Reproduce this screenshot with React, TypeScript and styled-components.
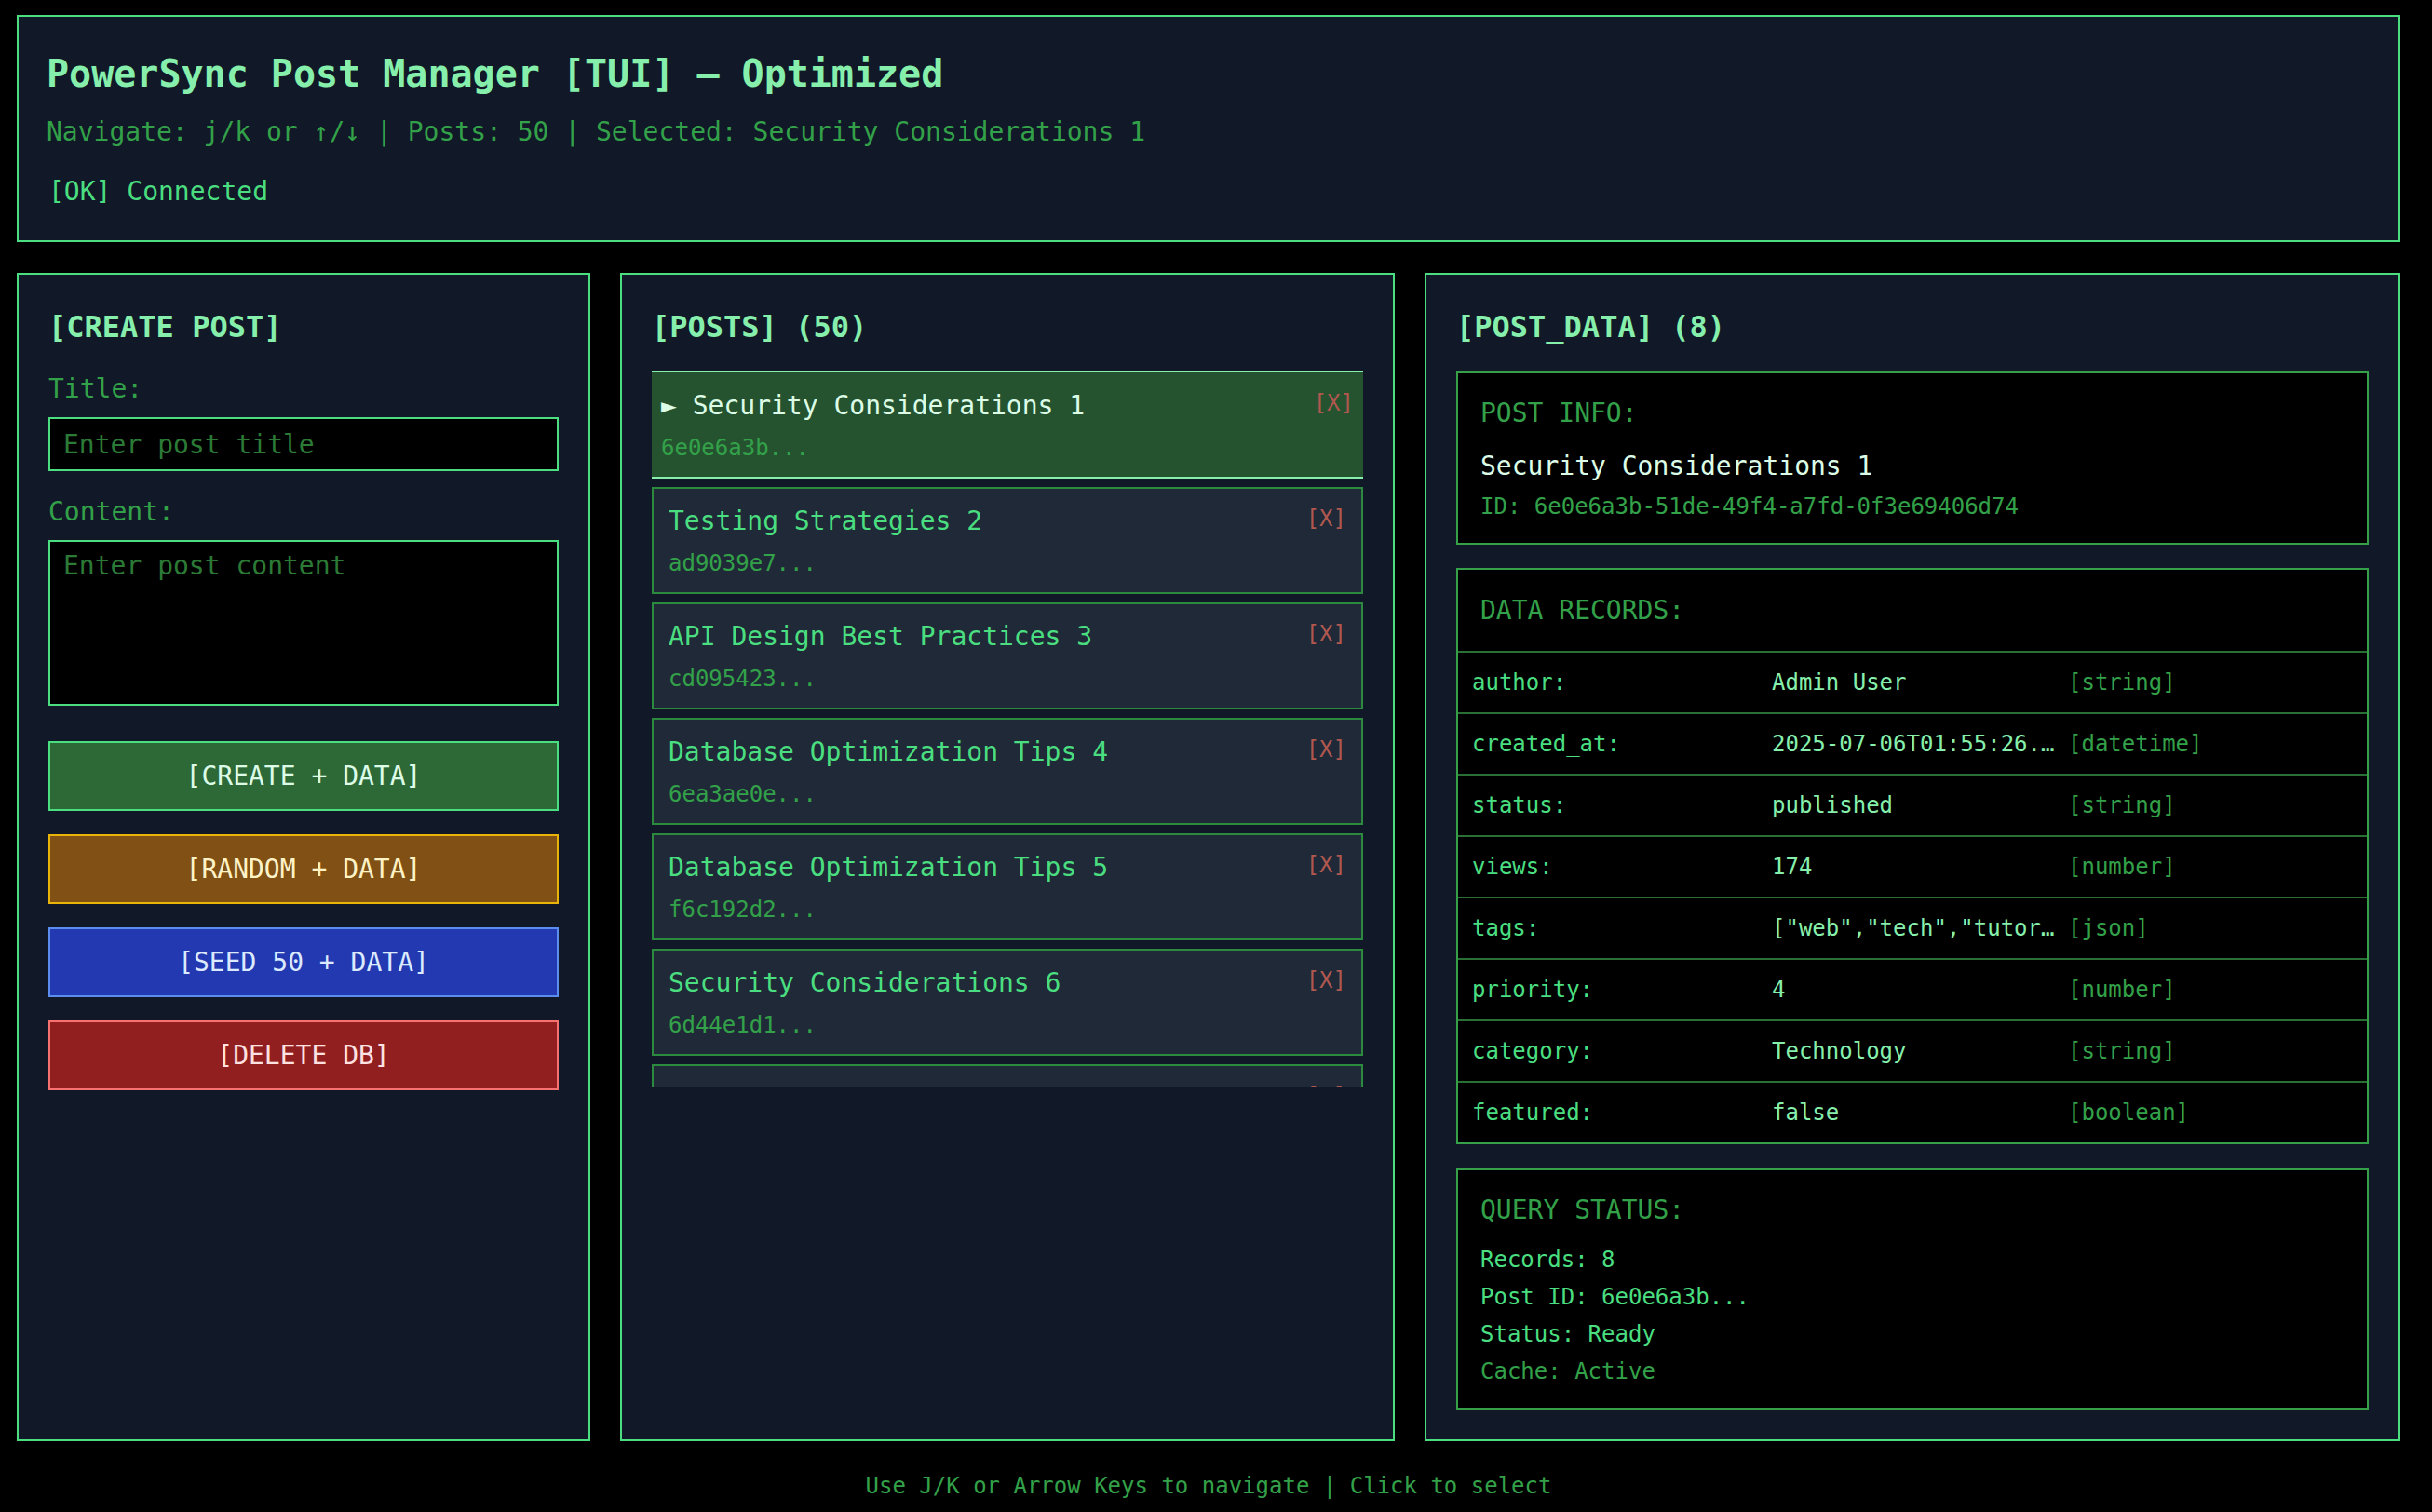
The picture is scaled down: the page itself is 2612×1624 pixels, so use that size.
import React, { useState } from "react";
import styled, { createGlobalStyle, css } from "styled-components";

const C = {
  page: "#000000",
  panel: "#111827",
  item: "#1f2937",
  border: "#4ade80",
  inner: "#35a048",
  itemBorder: "#2b8a3e",
  row: "#2a7035",
  bright: "#86efac",
  main: "#4ade80",
  dim: "#33a149",
  faint: "#2b7a36",
  pale: "#dcfce7",
  selected: "#255330",
  remove: "#b0584f",
};

const GlobalStyle = createGlobalStyle`
  html, body {
    margin: 0;
    background: ${C.page};
    font-family: "DejaVu Sans Mono", "Liberation Mono", monospace;
  }
  * { box-sizing: border-box; }
`;

const Screen = styled.div`
  width: 2560px;
  margin-left: 18px;
  padding-top: 16px;
  padding-bottom: 14px;
`;

const Header = styled.header`
  border: 2px solid ${C.border};
  background: ${C.panel};
  padding: 37px 30px 35px;
`;

const AppTitle = styled.h1`
  margin: 0;
  font-size: 40px;
  line-height: 48px;
  font-weight: bold;
  color: ${C.bright};
`;

const NavLine = styled.div`
  margin-top: 22px;
  font-size: 28px;
  line-height: 34px;
  color: ${C.dim};
`;

const Status = styled.div`
  margin-top: 30px;
  font-size: 28px;
  line-height: 34px;
  color: ${C.main};
  padding-left: 2px;
`;

const Columns = styled.div`
  display: grid;
  grid-template-columns: 616px 832px 1fr;
  column-gap: 32px;
  margin-top: 33px;
  align-items: stretch;
`;

const Panel = styled.section`
  background: ${C.panel};
  border: 2px solid ${C.border};
  padding: 37px 32px 32px;
  display: flex;
  flex-direction: column;
  min-width: 0;
`;

const PanelTitle = styled.h2`
  margin: 0 0 29px;
  font-size: 32px;
  line-height: 38px;
  font-weight: bold;
  color: ${C.bright};
`;

const Label = styled.label`
  display: block;
  font-size: 28px;
  line-height: 38px;
  color: ${C.dim};
  margin-bottom: 11px;
`;

const fieldBase = css`
  width: 100%;
  background: #000;
  border: 2px solid ${C.border};
  color: ${C.main};
  font-family: inherit;
  font-size: 28px;
  outline: none;
  &::placeholder {
    color: ${C.faint};
  }
`;

const TextInput = styled.input`
  ${fieldBase};
  display: block;
  height: 58px;
  padding: 0 14px;
  margin-bottom: 25px;
`;

const TextArea = styled.textarea`
  ${fieldBase};
  display: block;
  height: 178px;
  padding: 9px 14px;
  line-height: 34px;
  resize: none;
  margin-bottom: 38px;
`;

const tones = {
  create: { bg: "#2d6837", border: "#4ade80", text: "#dcfce7" },
  random: { bg: "#805014", border: "#eab308", text: "#fef3c7" },
  seed: { bg: "#2239b1", border: "#5b8def", text: "#dbeafe" },
  remove: { bg: "#911f1f", border: "#f87171", text: "#fee2e2" },
};

type Tone = keyof typeof tones;

const ActionButton = styled.button<{ $tone: Tone }>`
  display: block;
  width: 100%;
  height: 75px;
  margin-bottom: 25px;
  font-family: inherit;
  font-size: 28px;
  cursor: pointer;
  background: ${(p) => tones[p.$tone].bg};
  border: 2px solid ${(p) => tones[p.$tone].border};
  color: ${(p) => tones[p.$tone].text};
`;

const PostList = styled.div`
  height: 768px;
  overflow-y: auto;
  scrollbar-width: none;
  display: flex;
  flex-direction: column;
  gap: 9px;
  &::-webkit-scrollbar {
    display: none;
  }
`;

const PostItem = styled.div<{ $active: boolean }>`
  flex-shrink: 0;
  display: flex;
  align-items: flex-start;
  justify-content: space-between;
  cursor: pointer;
  background: ${(p) => (p.$active ? C.selected : C.item)};
  ${(p) =>
    p.$active
      ? css`
          border-top: 1px solid ${C.bright};
          border-bottom: 2px solid ${C.bright};
          padding: 19px 10px 16px;
        `
      : css`
          border: 2px solid ${C.itemBorder};
          padding: 18px 16px 16px;
        `}
`;

const PostText = styled.div`
  min-width: 0;
`;

const PostTitle = styled.div<{ $active: boolean }>`
  font-size: 28px;
  line-height: 34px;
  color: ${(p) => (p.$active ? C.pale : C.main)};
  white-space: nowrap;
`;

const PostId = styled.div`
  margin-top: 14px;
  font-size: 24px;
  line-height: 29px;
  color: ${C.dim};
`;

const RemoveMark = styled.span`
  flex-shrink: 0;
  font-size: 24px;
  line-height: 29px;
  color: ${C.remove};
`;

const InfoBox = styled.div<{ $gap?: number; $bottom?: number }>`
  background: #000;
  border: 2px solid ${C.inner};
  padding: 24px 24px ${(p) => p.$bottom ?? 24}px;
  margin-bottom: ${(p) => p.$gap ?? 0}px;
`;

const BoxTitle = styled.div`
  font-size: 28px;
  line-height: 38px;
  color: ${C.dim};
`;

const InfoName = styled.div`
  margin-top: 19px;
  font-size: 28px;
  line-height: 38px;
  color: ${C.pale};
`;

const InfoId = styled.div`
  margin-top: 10px;
  font-size: 24px;
  line-height: 29px;
  color: ${C.dim};
`;

const RecordsBox = styled.div`
  background: #000;
  border: 2px solid ${C.inner};
  margin-bottom: 26px;
`;

const RecordsHead = styled.div`
  padding: 25px 24px 24px;
  border-bottom: 2px solid ${C.row};
`;

const RecordRow = styled.div`
  display: grid;
  grid-template-columns: 322px 318px 1fr;
  align-items: center;
  height: 66px;
  padding-left: 15px;
  font-size: 24px;
  border-bottom: 2px solid ${C.row};
  &:last-child {
    height: 64px;
    border-bottom: none;
  }
`;

const RecordKey = styled.span`
  color: ${C.main};
`;

const RecordValue = styled.span`
  color: ${C.bright};
  padding-right: 10px;
  white-space: nowrap;
  overflow: hidden;
  text-overflow: ellipsis;
`;

const RecordType = styled.span`
  color: ${C.dim};
`;

const QueryLines = styled.div`
  display: flex;
  flex-direction: column;
  gap: 8px;
  margin-top: 18px;
`;

const QueryLine = styled.div<{ $dim?: boolean }>`
  font-size: 24px;
  line-height: 32px;
  color: ${(p) => (p.$dim ? C.dim : C.main)};
`;

const Footer = styled.footer`
  margin-top: 34px;
  text-align: center;
  font-size: 24px;
  line-height: 29px;
  color: ${C.dim};
`;

const posts = [
  { title: "Security Considerations 1", id: "6e0e6a3b-51de-49f4-a7fd-0f3e69406d74" },
  { title: "Testing Strategies 2", id: "ad9039e7-2c41-4b8e-9d1a-7f02c5e1b3a9" },
  { title: "API Design Best Practices 3", id: "cd095423-8f7b-4e2d-a1c6-3b9e0d4f5a21" },
  { title: "Database Optimization Tips 4", id: "6ea3ae0e-4d52-41f3-b7a8-9c1e2f6d0b47" },
  { title: "Database Optimization Tips 5", id: "f6c192d2-7a3e-4b19-8e5d-2f0c6a9b1d38" },
  { title: "Security Considerations 6", id: "6d44e1d1-9b2c-4f7a-a3e6-1d8c5b0f2e94" },
  { title: "Performance Monitoring 7", id: "b81f2c7a-3e9d-4a56-9c0b-7e2f1d4a6c85" },
  { title: "Testing Strategies 8", id: "3a7d9e1c-5b24-4f8e-a6d0-9c3b2e1f7a46" },
  { title: "API Design Best Practices 9", id: "e2c5a8f1-7d3b-49e6-b1a4-6f0d9c2e8b53" },
  { title: "Deployment Pipelines 10", id: "94b0d3e6-1f8a-4c27-8d5e-3a6b9f0c1e72" },
];

const records = [
  { key: "author", value: "Admin User", type: "string" },
  { key: "created_at", value: "2025-07-06T01:55:26.482Z", type: "datetime" },
  { key: "status", value: "published", type: "string" },
  { key: "views", value: "174", type: "number" },
  { key: "tags", value: '["web","tech","tutorial"]', type: "json" },
  { key: "priority", value: "4", type: "number" },
  { key: "category", value: "Technology", type: "string" },
  { key: "featured", value: "false", type: "boolean" },
];

export default function App() {
  const [selected, setSelected] = useState(0);
  const current = posts[selected];

  return (
    <>
      <GlobalStyle />
      <Screen>
        <Header>
          <AppTitle>PowerSync Post Manager [TUI] – Optimized</AppTitle>
          <NavLine>
            Navigate: j/k or ↑/↓ | Posts: 50 | Selected: {current.title}
          </NavLine>
          <Status>[OK] Connected</Status>
        </Header>

        <Columns>
          <Panel>
            <PanelTitle>[CREATE POST]</PanelTitle>
            <Label>Title:</Label>
            <TextInput placeholder="Enter post title" />
            <Label>Content:</Label>
            <TextArea placeholder="Enter post content" />
            <ActionButton $tone="create">[CREATE + DATA]</ActionButton>
            <ActionButton $tone="random">[RANDOM + DATA]</ActionButton>
            <ActionButton $tone="seed">[SEED 50 + DATA]</ActionButton>
            <ActionButton $tone="remove">[DELETE DB]</ActionButton>
          </Panel>

          <Panel>
            <PanelTitle>[POSTS] (50)</PanelTitle>
            <PostList>
              {posts.map((post, i) => (
                <PostItem
                  key={post.id}
                  $active={i === selected}
                  onClick={() => setSelected(i)}
                >
                  <PostText>
                    <PostTitle $active={i === selected}>
                      {i === selected ? "► " : ""}
                      {post.title}
                    </PostTitle>
                    <PostId>{post.id.slice(0, 8)}...</PostId>
                  </PostText>
                  <RemoveMark>[X]</RemoveMark>
                </PostItem>
              ))}
            </PostList>
          </Panel>

          <Panel>
            <PanelTitle>[POST_DATA] (8)</PanelTitle>
            <InfoBox $gap={25} $bottom={24}>
              <BoxTitle>POST INFO:</BoxTitle>
              <InfoName>{current.title}</InfoName>
              <InfoId>ID: {current.id}</InfoId>
            </InfoBox>

            <RecordsBox>
              <RecordsHead>
                <BoxTitle>DATA RECORDS:</BoxTitle>
              </RecordsHead>
              {records.map((r) => (
                <RecordRow key={r.key}>
                  <RecordKey>{r.key}:</RecordKey>
                  <RecordValue>{r.value}</RecordValue>
                  <RecordType>[{r.type}]</RecordType>
                </RecordRow>
              ))}
            </RecordsBox>

            <InfoBox $bottom={23}>
              <BoxTitle>QUERY STATUS:</BoxTitle>
              <QueryLines>
                <QueryLine>Records: 8</QueryLine>
                <QueryLine>Post ID: {current.id.slice(0, 8)}...</QueryLine>
                <QueryLine>Status: Ready</QueryLine>
                <QueryLine $dim>Cache: Active</QueryLine>
              </QueryLines>
            </InfoBox>
          </Panel>
        </Columns>

        <Footer>Use J/K or Arrow Keys to navigate | Click to select</Footer>
      </Screen>
    </>
  );
}
